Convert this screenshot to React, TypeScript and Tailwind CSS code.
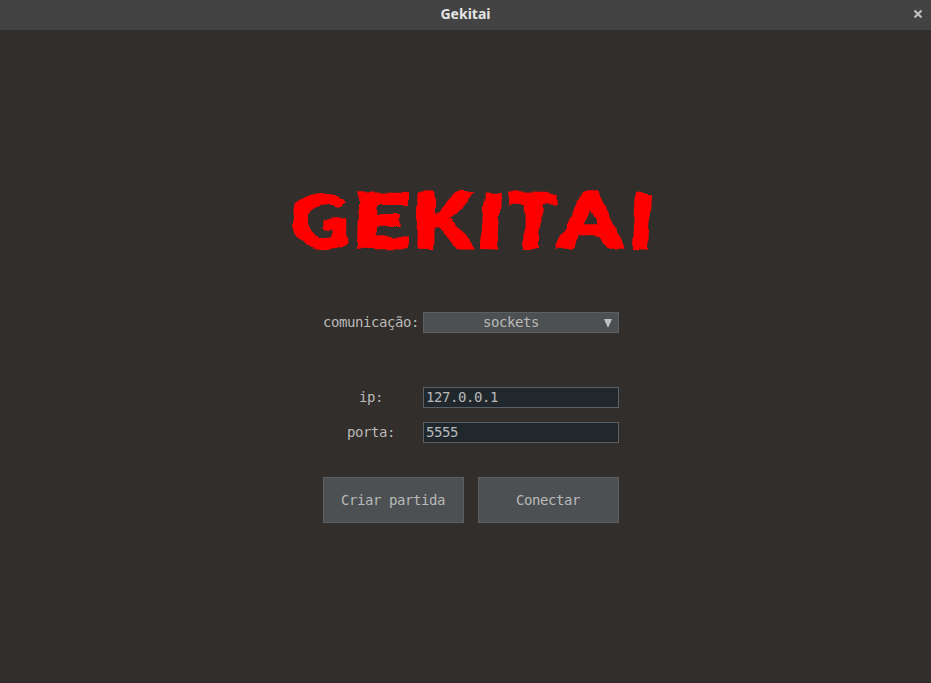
import React from "react";

const mono = "font-['DejaVu_Sans_Mono',monospace] text-[14px] tracking-[-0.43px] leading-[19px] text-[#b9b9b8]";

const letters = [
  { ch: "G", x: 291, w: 58, r: 0 },
  { ch: "E", x: 352, w: 56, r: 1 },
  { ch: "K", x: 412, w: 59, r: 1 },
  { ch: "I", x: 478, w: 23, r: 3 },
  { ch: "T", x: 508, w: 48, r: 1 },
  { ch: "A", x: 559, w: 62, r: 0 },
  { ch: "I", x: 629, w: 23, r: 3 },
];

function Logo() {
  return (
    <svg className="block w-full h-[120px] shrink-0" viewBox="0 0 931 120" role="img" aria-label="GEKITAI">
      <defs>
        <filter id="rough" x="-5%" y="-20%" width="110%" height="140%">
          <feTurbulence type="fractalNoise" baseFrequency="0.045" numOctaves="2" seed="9" result="noise" />
          <feDisplacementMap in="SourceGraphic" in2="noise" scale="9" xChannelSelector="R" yChannelSelector="G" />
        </filter>
      </defs>
      <text y="87" fill="#ff0000" stroke="#ff0000" strokeWidth="3.5" strokeLinejoin="miter" fontSize="73" fontWeight="900" filter="url(#rough)" className="font-['Lato',sans-serif]">
        {letters.map((l, i) => (
          <tspan key={i} x={l.x} rotate={l.r} textLength={l.w} lengthAdjust="spacingAndGlyphs">{l.ch}</tspan>
        ))}
      </text>
    </svg>
  );
}

function Field({ label, value }: { label: string; value: string }) {
  return (
    <label className="flex h-[21px] items-center">
      <span className={`w-[100px] pr-1 text-center whitespace-pre ${mono}`}>{label}</span>
      <input
        defaultValue={value}
        className={`h-[21px] w-[196px] border border-[#5a6064] bg-[#21282d] pr-[3px] pb-[2px] pl-[2px] outline-none ${mono}`}
      />
    </label>
  );
}

function Button({ children }: { children: React.ReactNode }) {
  return (
    <button className={`h-[46px] w-[141px] border border-[#5a6064] bg-[#4c5052] pr-px ${mono}`}>{children}</button>
  );
}

export default function App() {
  return (
    <div className="flex h-[683px] w-[931px] flex-col overflow-hidden border-b border-[#2c2828] bg-[#322e2b]">
      <header className="grid h-[30px] shrink-0 grid-cols-[1fr_auto_1fr] items-center bg-[#434343] pb-[2px]">
        <h1 className="col-start-2 font-['Noto_Sans',sans-serif] text-[14px] leading-5 font-bold text-[#e4e4e4]">Gekitai</h1>
        <button aria-label="Fechar" className="mr-[9px] justify-self-end">
          <svg className="block h-2 w-2" viewBox="0 0 8 8" stroke="#bebebe" strokeWidth="2.2">
            <path d="M.5.5l7 7M7.5.5l-7 7" />
          </svg>
        </button>
      </header>
      <main className="flex flex-col pt-[130px]">
        <Logo />
        <form className="ml-[323px] mt-[32px] flex w-[296px] flex-col">
          <div className="flex h-[21px] items-center">
            <span className={`w-[100px] ${mono}`}>comunicação:</span>
            <button type="button" className={`flex h-[21px] w-[196px] items-center border border-[#5a6064] bg-[#4c5052] ${mono}`}>
              <span className="w-[174px] text-center">sockets</span>
              <svg className="ml-[6px] h-2 w-2" viewBox="0 0 8 8" fill="#c0c0c0"><path d="M0 0h8L4.5 8h-1z" /></svg>
            </button>
          </div>
          <div className="mt-[54px] flex flex-col gap-[14px]">
            <Field label="ip:" value="127.0.0.1" />
            <Field label="porta:" value="5555" />
          </div>
          <div className="mt-[34px] flex justify-between">
            <Button>Criar partida</Button>
            <Button>Conectar</Button>
          </div>
        </form>
      </main>
    </div>
  );
}
